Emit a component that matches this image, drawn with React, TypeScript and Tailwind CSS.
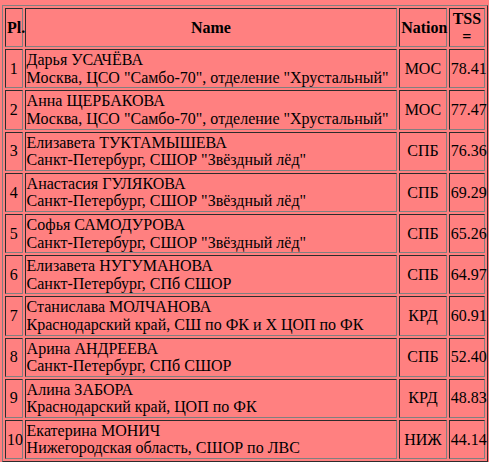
import React from 'react';

interface Skater {
  place: number;
  name: string;
  club: string;
  nation: string;
  tss: string;
}

const skaters: Skater[] = [
  { place: 1, name: 'Дарья УСАЧЁВА', club: 'Москва, ЦСО "Самбо-70", отделение "Хрустальный"', nation: 'МОС', tss: '78.41' },
  { place: 2, name: 'Анна ЩЕРБАКОВА', club: 'Москва, ЦСО "Самбо-70", отделение "Хрустальный"', nation: 'МОС', tss: '77.47' },
  { place: 3, name: 'Елизавета ТУКТАМЫШЕВА', club: 'Санкт-Петербург, СШОР "Звёздный лёд"', nation: 'СПБ', tss: '76.36' },
  { place: 4, name: 'Анастасия ГУЛЯКОВА', club: 'Санкт-Петербург, СШОР "Звёздный лёд"', nation: 'СПБ', tss: '69.29' },
  { place: 5, name: 'Софья САМОДУРОВА', club: 'Санкт-Петербург, СШОР "Звёздный лёд"', nation: 'СПБ', tss: '65.26' },
  { place: 6, name: 'Елизавета НУГУМАНОВА', club: 'Санкт-Петербург, СПб СШОР', nation: 'СПБ', tss: '64.97' },
  { place: 7, name: 'Станислава МОЛЧАНОВА', club: 'Краснодарский край, СШ по ФК и Х ЦОП по ФК', nation: 'КРД', tss: '60.91' },
  { place: 8, name: 'Арина АНДРЕЕВА', club: 'Санкт-Петербург, СПб СШОР', nation: 'СПБ', tss: '52.40' },
  { place: 9, name: 'Алина ЗАБОРА', club: 'Краснодарский край, ЦОП по ФК', nation: 'КРД', tss: '48.83' },
  { place: 10, name: 'Екатерина МОНИЧ', club: 'Нижегородская область, СШОР по ЛВС', nation: 'НИЖ', tss: '44.14' },
];

const cell = 'border border-[#808080] [border-style:inset] p-px';

export default function App() {
  return (
    <div className="min-h-screen bg-[#ff8080] pl-[2px] pt-[5px] text-black text-[16px] leading-[17.6px] font-[family-name:'Liberation_Serif','Times_New_Roman',serif]">
      <table className="w-[486px] table-fixed border-separate border-spacing-[2px] border border-[#808080] [border-style:outset]">
        <colgroup>
          <col className="w-[17px]" />
          <col className="w-[360px]" />
          <col className="w-[46px]" />
          <col className="w-[35px]" />
        </colgroup>
        <thead>
          <tr>
            <th className={`${cell} text-center font-bold`}>Pl.</th>
            <th className={`${cell} text-center font-bold`}>Name</th>
            <th className={`${cell} text-center font-bold`}>Nation</th>
            <th className={`${cell} text-center font-bold`}>TSS =</th>
          </tr>
        </thead>
        <tbody>
          {skaters.map((s) => (
            <tr key={s.place}>
              <td className={`${cell} text-center`}>{s.place}</td>
              <td className={`${cell} text-left whitespace-nowrap`}>
                {s.name}
                <br />
                {s.club}
              </td>
              <td className={`${cell} text-center`}>{s.nation}</td>
              <td className={`${cell} text-center`}>{s.tss}</td>
            </tr>
          ))}
        </tbody>
      </table>
    </div>
  );
}
